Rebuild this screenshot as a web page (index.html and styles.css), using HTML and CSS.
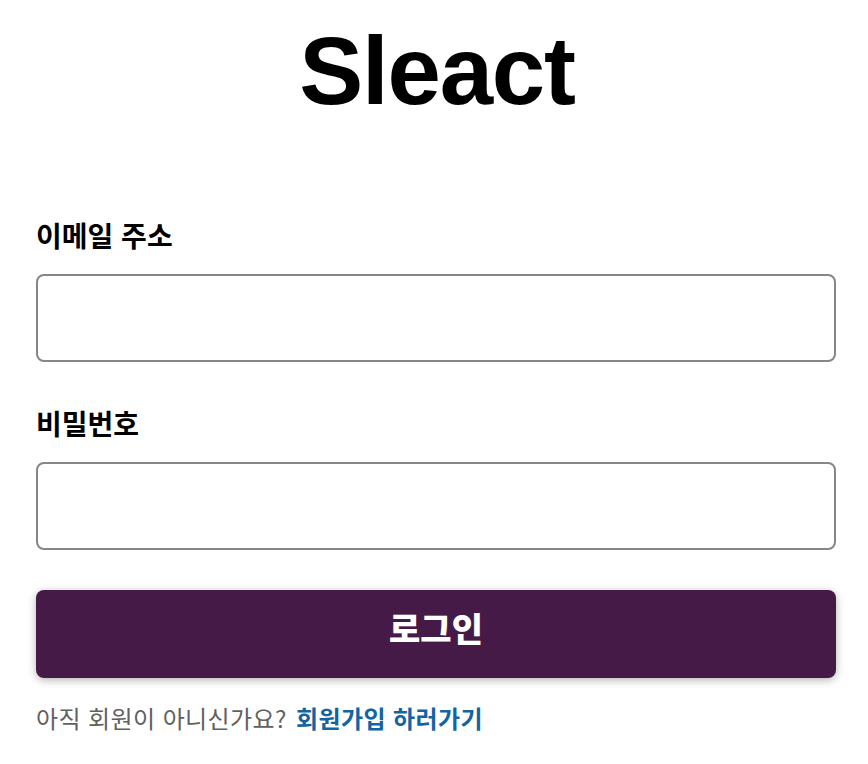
FILE: index.html
```html
<!DOCTYPE html>
<html lang="ko">
<head>
	<meta charset="UTF-8">
	<title>Sleact</title>
	<link rel="stylesheet" href="styles.css">
</head>
<body>

<header class="header">Sleact</header>

<form class="form" onsubmit="return false">
	<label class="label" for="email">
		<span>이메일 주소</span>
		<input type="email" id="email" name="email" class="input">
	</label>
	<label class="label" for="password">
		<span>비밀번호</span>
		<input type="password" id="password" name="password" class="input">
	</label>
	<button type="submit" class="button">로그인</button>
</form>

<p class="link-container">아직 회원이 아니신가요? <a href="#">회원가입 하러가기</a></p>

</body>
</html>
```

FILE: styles.css
```css
* {
	margin: 0;
	padding: 0;
	box-sizing: border-box;
}
body {
	background: #fff;
	font-family: "Noto Sans CJK KR", "Noto Sans", sans-serif;
	color: #1d1c1d;
}
.header {
	text-align: center;
	font-family: "Liberation Sans", Arial, sans-serif;
	font-weight: 700;
	font-size: 96px;
	line-height: 92px;
	letter-spacing: -1.2px;
	color: #000;
	margin: 25px 0 97px 6px;
}
.form {
	width: 800px;
	margin-left: 36px;
}
.label {
	display: block;
}
.label > span {
	display: block;
	padding-bottom: 18px;
	font-size: 28px;
	line-height: 42px;
	font-weight: 700;
	color: #000;
	cursor: pointer;
}
.input {
	display: block;
	width: 100%;
	height: 88px;
	margin: 0 0 40px;
	padding: 22px 24px 26px;
	border: 2px solid #868686;
	border-radius: 8px;
	font-size: 36px;
	background: #fff;
	outline: none;
}
.button {
	display: block;
	width: 100%;
	height: 88px;
	margin-bottom: 22px;
	padding: 0 32px 14px;
	border: none;
	border-radius: 8px;
	background-color: #461a47;
	color: #fff;
	font-family: "Noto Sans CJK KR", sans-serif;
	font-size: 34px;
	font-weight: 900;
	box-shadow: 0 2px 8px rgba(0, 0, 0, 0.3);
	cursor: pointer;
}
.link-container {
	width: 800px;
	margin-left: 36px;
	font-size: 24px;
	letter-spacing: 0.4px;
	color: #616061;
}
.link-container a {
	margin-left: 2px;
	color: #1264a3;
	text-decoration: none;
	font-weight: 700;
}
```
